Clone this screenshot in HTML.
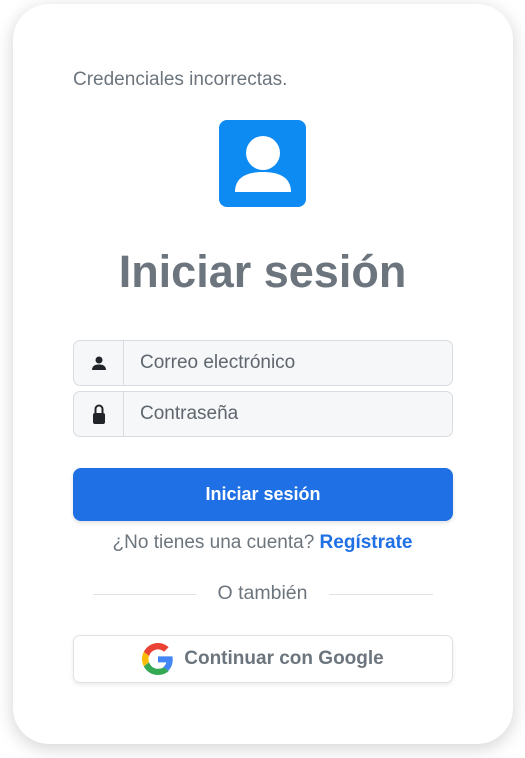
<!DOCTYPE html>
<html><head><meta charset="utf-8"><style>
*{box-sizing:border-box;margin:0;padding:0}
body{width:525px;height:758px;background:#fff;font-family:"Liberation Sans",sans-serif;position:relative;overflow:hidden}
.card{position:absolute;left:13px;top:4px;width:500px;height:740px;background:#fff;border-radius:36px;box-shadow:0 4px 18px rgba(0,0,0,.18)}
.abs{position:absolute}
.err{left:73px;top:69px;font-size:19px;color:#6c757d}
.icon{left:219px;top:120px;width:87px;height:87px;background:#0d8bf2;border-radius:8px;overflow:hidden}
h1{position:absolute;left:0;width:525px;top:246px;text-align:center;font-size:45px;font-weight:bold;color:#6c757d}
.inp{left:73px;width:380px;height:46px;border:1px solid #d8dce0;border-radius:7px;background:#f6f7f9;display:flex}
.inp .ad{width:50px;border-right:1px solid #d8dce0;display:flex;align-items:center;justify-content:center}
.inp .t{padding-left:16px;font-size:19px;color:#5f666d;display:flex;align-items:center}
.btn{left:73px;top:468px;width:380px;height:53px;background:#1f6fe5;border-radius:8px;color:#fff;font-weight:bold;font-size:18px;display:flex;align-items:center;justify-content:center;box-shadow:0 2px 4px rgba(0,0,0,.12)}
.reg{left:0;width:525px;top:532px;text-align:center;font-size:19px;color:#6c757d}
.reg b{color:#1f6fe5}
.line{height:1px;background:#dee2e6;top:594px}
.o{left:0;width:525px;top:582px;text-align:center;font-size:19.5px;color:#6c757d}
.g{left:73px;top:635px;width:380px;height:48px;border:1px solid #dee2e6;border-radius:7px;background:#fff;display:flex;align-items:center;justify-content:center;font-size:19px;font-weight:bold;color:#6c757d;box-shadow:0 2px 4px rgba(0,0,0,.08)}
</style></head><body>
<div class="card"></div>
<div class="abs err">Credenciales incorrectas.</div>
<div class="abs icon"><svg width="87" height="87" viewBox="0 0 87 87"><circle cx="44" cy="33" r="17" fill="#fff"/><path d="M16 72 C16 56 30 52 44 52 C58 52 72 56 72 72 Z" fill="#fff"/></svg></div>
<h1>Iniciar sesión</h1>
<div class="abs inp" style="top:340px"><div class="ad"><svg width="16" height="16" viewBox="0 0 16 16"><circle cx="8" cy="5" r="3.5" fill="#212529"/><path d="M1 15c0-4 3-5.5 7-5.5s7 1.5 7 5.5z" fill="#212529"/></svg></div><div class="t">Correo electrónico</div></div>
<div class="abs inp" style="top:391px"><div class="ad"><svg width="14" height="22" viewBox="0 0 14 22"><path d="M3.5 10V6a3.5 3.5 0 0 1 7 0v4" stroke="#212529" stroke-width="2" fill="none"/><rect x="1" y="10" width="12" height="11" rx="2" fill="#212529"/></svg></div><div class="t">Contraseña</div></div>
<div class="abs btn">Iniciar sesión</div>
<div class="abs reg">¿No tienes una cuenta? <b>Regístrate</b></div>
<div class="abs line" style="left:93px;width:103px"></div>
<div class="abs line" style="left:329px;width:104px"></div>
<div class="abs o">O también</div>
<div class="abs g"><svg width="32" height="32" viewBox="0 0 48 48" style="margin-right:10px"><path fill="#EA4335" d="M24 9.5c3.5 0 6.6 1.2 9.1 3.6l6.8-6.8C35.8 2.4 30.3 0 24 0 14.6 0 6.6 5.4 2.7 13.3l7.9 6.2C12.5 13.6 17.8 9.5 24 9.5z"/><path fill="#4285F4" d="M46.1 24.5c0-1.6-.1-3.1-.4-4.5H24v9h12.4c-.5 2.900-2.2 5.3-4.6 7l7.4 5.8c4.3-4 6.9-9.9 6.9-17.3z"/><path fill="#FBBC05" d="M10.5 28.6c-.5-1.4-.8-3-.8-4.6s.3-3.2.8-4.6l-7.9-6.2C1 16.5 0 20.1 0 24s1 7.5 2.7 10.8l7.8-6.2z"/><path fill="#34A853" d="M24 48c6.5 0 11.9-2.1 15.9-5.8l-7.4-5.8c-2.1 1.4-4.8 2.3-8.5 2.3-6.2 0-11.5-4.2-13.4-9.9l-7.9 6.2C6.6 42.6 14.6 48 24 48z"/></svg>Continuar con Google</div>
</body></html>
